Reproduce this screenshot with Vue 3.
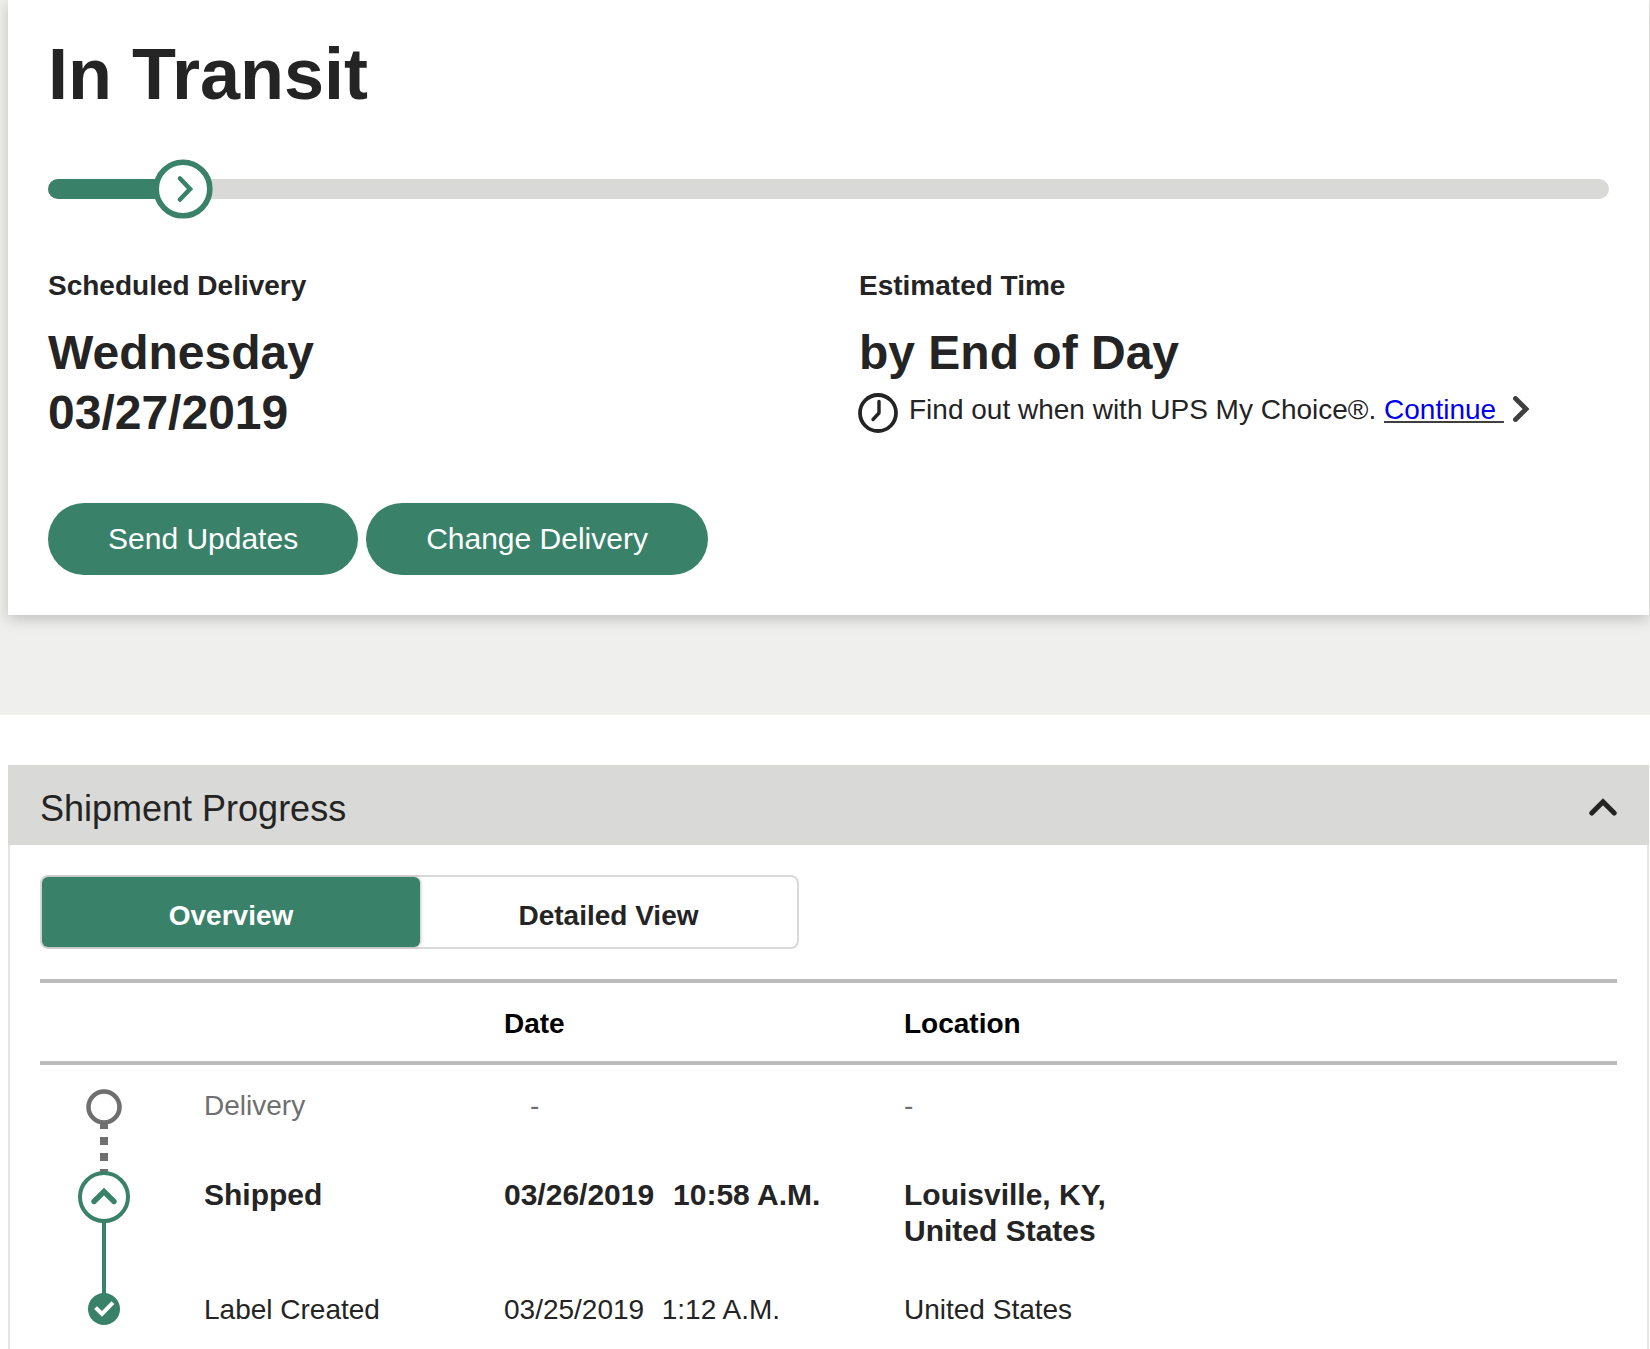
<script setup>
const rows = [
  { key: 'delivery', status: 'Delivery', date: '-', time: '', location: ['-'] },
  { key: 'shipped', status: 'Shipped', date: '03/26/2019', time: '10:58 A.M.', location: ['Louisville, KY,', 'United States'] },
  { key: 'created', status: 'Label Created', date: '03/25/2019', time: '1:12 A.M.', location: ['United States'] }
]
</script>

<template>
  <div class="page">
    <section class="top">
      <div class="card">
        <h1 class="title">In Transit</h1>
        <div class="track">
          <div class="fill"></div>
          <svg class="thumb" width="60" height="60" viewBox="0 0 60 60">
            <circle cx="30" cy="30" r="26.800" fill="#fff" stroke="#3a816a" stroke-width="5.600" />
            <path d="M27 19.500l10 10.500-10 10.500" fill="none" stroke="#3a816a" stroke-width="4.600" stroke-linecap="round" stroke-linejoin="miter" />
          </svg>
        </div>
        <div class="info">
          <div class="col">
            <div class="label">Scheduled Delivery</div>
            <div class="value">Wednesday<br />03/27/2019</div>
          </div>
          <div class="col">
            <div class="label">Estimated Time</div>
            <div class="value">by End of Day</div>
            <div class="choice">
              <svg class="clock" width="40" height="40" viewBox="0 0 40 40">
                <circle cx="20" cy="20" r="18" fill="none" stroke="#242424" stroke-width="3.800" />
                <path d="M21 8.500V20l-6 6.500" fill="none" stroke="#242424" stroke-width="3.400" stroke-linecap="round" stroke-linejoin="round" />
              </svg>
              <span class="choice-text">Find out when with UPS My Choice®. <a class="link" href="#">Continue </a></span>
              <svg class="go" width="16" height="26" viewBox="0 0 16 26">
                <path d="M2.500 2.500l10.500 10.500L2.500 23.500" fill="none" stroke="#3f3f3f" stroke-width="4.800" stroke-linecap="round" stroke-linejoin="miter" />
              </svg>
            </div>
          </div>
        </div>
        <div class="actions">
          <button class="pill">Send Updates</button>
          <button class="pill">Change Delivery</button>
        </div>
      </div>
    </section>

    <section class="bottom">
      <header class="panel-head">
        <span class="panel-title">Shipment Progress</span>
        <svg class="collapse" width="28" height="18" viewBox="0 0 28 18">
          <path d="M2.800 15L14 3.800 25.200 15" fill="none" stroke="#242424" stroke-width="5" stroke-linecap="round" stroke-linejoin="miter" />
        </svg>
      </header>
      <div class="panel-body">
        <div class="tabs">
          <div class="tab active">Overview</div>
          <div class="tab">Detailed View</div>
        </div>
        <div class="thead">
          <span>Date</span>
          <span>Location</span>
        </div>
        <div class="timeline">
          <svg class="rail" width="164" height="270" viewBox="0 0 164 270">
            <path d="M64 54V110" stroke="#6f6f6f" stroke-width="8" stroke-dasharray="8 8" stroke-dashoffset="-2" fill="none" />
            <circle cx="64" cy="42" r="15.500" fill="#fff" stroke="#6f6f6f" stroke-width="4.500" />
            <path d="M64 150V232" stroke="#3a816a" stroke-width="4" fill="none" />
            <circle cx="64" cy="132" r="24" fill="#fff" stroke="#3a816a" stroke-width="4" />
            <path d="M54 136.500l10-10 10 10" fill="none" stroke="#3a816a" stroke-width="5.400" stroke-linecap="round" stroke-linejoin="miter" />
            <circle cx="64" cy="244" r="16" fill="#3a816a" />
            <path d="M57 244l5 5 9.500-10" fill="none" stroke="#fff" stroke-width="4" stroke-linecap="square" />
          </svg>
          <div class="rows">
            <div v-for="r in rows" :key="r.key" class="row" :class="r.key">
              <div>{{ r.status }}</div>
              <div class="date">{{ r.date }}<span v-if="r.time" class="time">{{ r.time }}</span></div>
              <div>
                <div v-for="l in r.location" :key="l">{{ l }}</div>
              </div>
            </div>
          </div>
        </div>
      </div>
    </section>
  </div>
</template>

<style>
html, body { margin: 0; background: #fff; }
</style>

<style scoped>
.page {
  width: 1650px;
  height: 1349px;
  overflow: hidden;
  font-family: "Liberation Sans", Arial, sans-serif;
  color: #242424;
  background: #fff;
}
.top {
  background: #efefed;
  padding: 0 1px 100px 8px;
}
.card {
  background: #fff;
  height: 615px;
  box-sizing: border-box;
  padding: 34px 40px 40px;
  box-shadow: 0 4px 14px rgba(0, 0, 0, 0.2);
}
.title {
  margin: 0;
  font-size: 72px;
  line-height: 80px;
  font-weight: 700;
}
.track {
  margin-top: 65px;
  height: 20px;
  width: 1561px;
  border-radius: 10px;
  background: #d9d9d7;
  position: relative;
}
.fill {
  width: 120px;
  height: 20px;
  border-radius: 10px 0 0 10px;
  background: #3a816a;
}
.thumb {
  position: absolute;
  left: 105px;
  top: -20px;
}
.info {
  display: grid;
  grid-template-columns: 811px 1fr;
  margin-top: 69px;
}
.label {
  font-size: 28px;
  line-height: 36px;
  font-weight: 700;
}
.value {
  margin-top: 19px;
  font-size: 48px;
  line-height: 60px;
  font-weight: 700;
}
.choice {
  display: flex;
  align-items: flex-start;
  margin-top: 9px;
  font-size: 28px;
  line-height: 36px;
}
.clock { margin-top: 1px; flex: none; margin-left: -1px; }
.choice-text { margin-left: 11px; white-space: pre; }
.link {
  color: #0000ee;
  text-decoration: underline;
  text-decoration-color: #3f3f3f;
}
.go { margin-left: 9px; margin-top: 4px; flex: none; }
.actions {
  display: flex;
  gap: 8px;
  margin-top: 60px;
}
.pill {
  height: 72px;
  padding: 0 60px;
  border: none;
  border-radius: 36px;
  background: #3a816a;
  color: #fff;
  font-family: inherit;
  font-size: 30px;
}
.bottom {
  padding: 50px 1px 0 8px;
}
.panel-head {
  height: 80px;
  background: #d9d9d7;
  display: flex;
  align-items: center;
  justify-content: space-between;
  padding: 0 32px;
}
.panel-title {
  font-size: 36px;
  line-height: 44px;
  padding-top: 8px;
}
.collapse { margin-top: 4px; }
.panel-body {
  border: solid #e4e4e2;
  border-width: 0 2px;
  height: 504px;
  padding: 30px 30px 0;
}
.tabs {
  width: 759px;
  height: 74px;
  box-sizing: border-box;
  border: 2px solid #d9d9d7;
  border-radius: 8px;
  display: grid;
  grid-template-columns: 378px 1fr;
  font-size: 28px;
  font-weight: 700;
}
.tab {
  display: flex;
  align-items: center;
  justify-content: center;
  padding-top: 8px;
}
.tab.active {
  background: #3a816a;
  color: #fff;
  border-radius: 6px;
  box-shadow: 1px 0 3px rgba(0, 0, 0, 0.25);
}
.thead {
  margin-top: 30px;
  height: 78px;
  box-sizing: content-box;
  border: solid #bbb;
  border-width: 4px 0;
  display: grid;
  grid-template-columns: 400px 1fr;
  padding-left: 464px;
  align-items: center;
  font-size: 28px;
  font-weight: 700;
  color: #000;
}
.thead span { padding-top: 4px; }
.timeline {
  display: flex;
}
.rail { flex: none; }
.rows {
  flex: 1;
  padding-top: 23px;
  font-size: 28px;
  line-height: 36px;
}
.row {
  display: grid;
  grid-template-columns: 300px 400px 1fr;
}
.time { margin-left: 0.63em; }
.row.delivery {
  color: #6f6f6f;
  margin-bottom: 53px;
}
.row.delivery .date { padding-left: 26px; }
.row.shipped {
  font-size: 30px;
  font-weight: 700;
  margin-bottom: 43px;
}
</style>
